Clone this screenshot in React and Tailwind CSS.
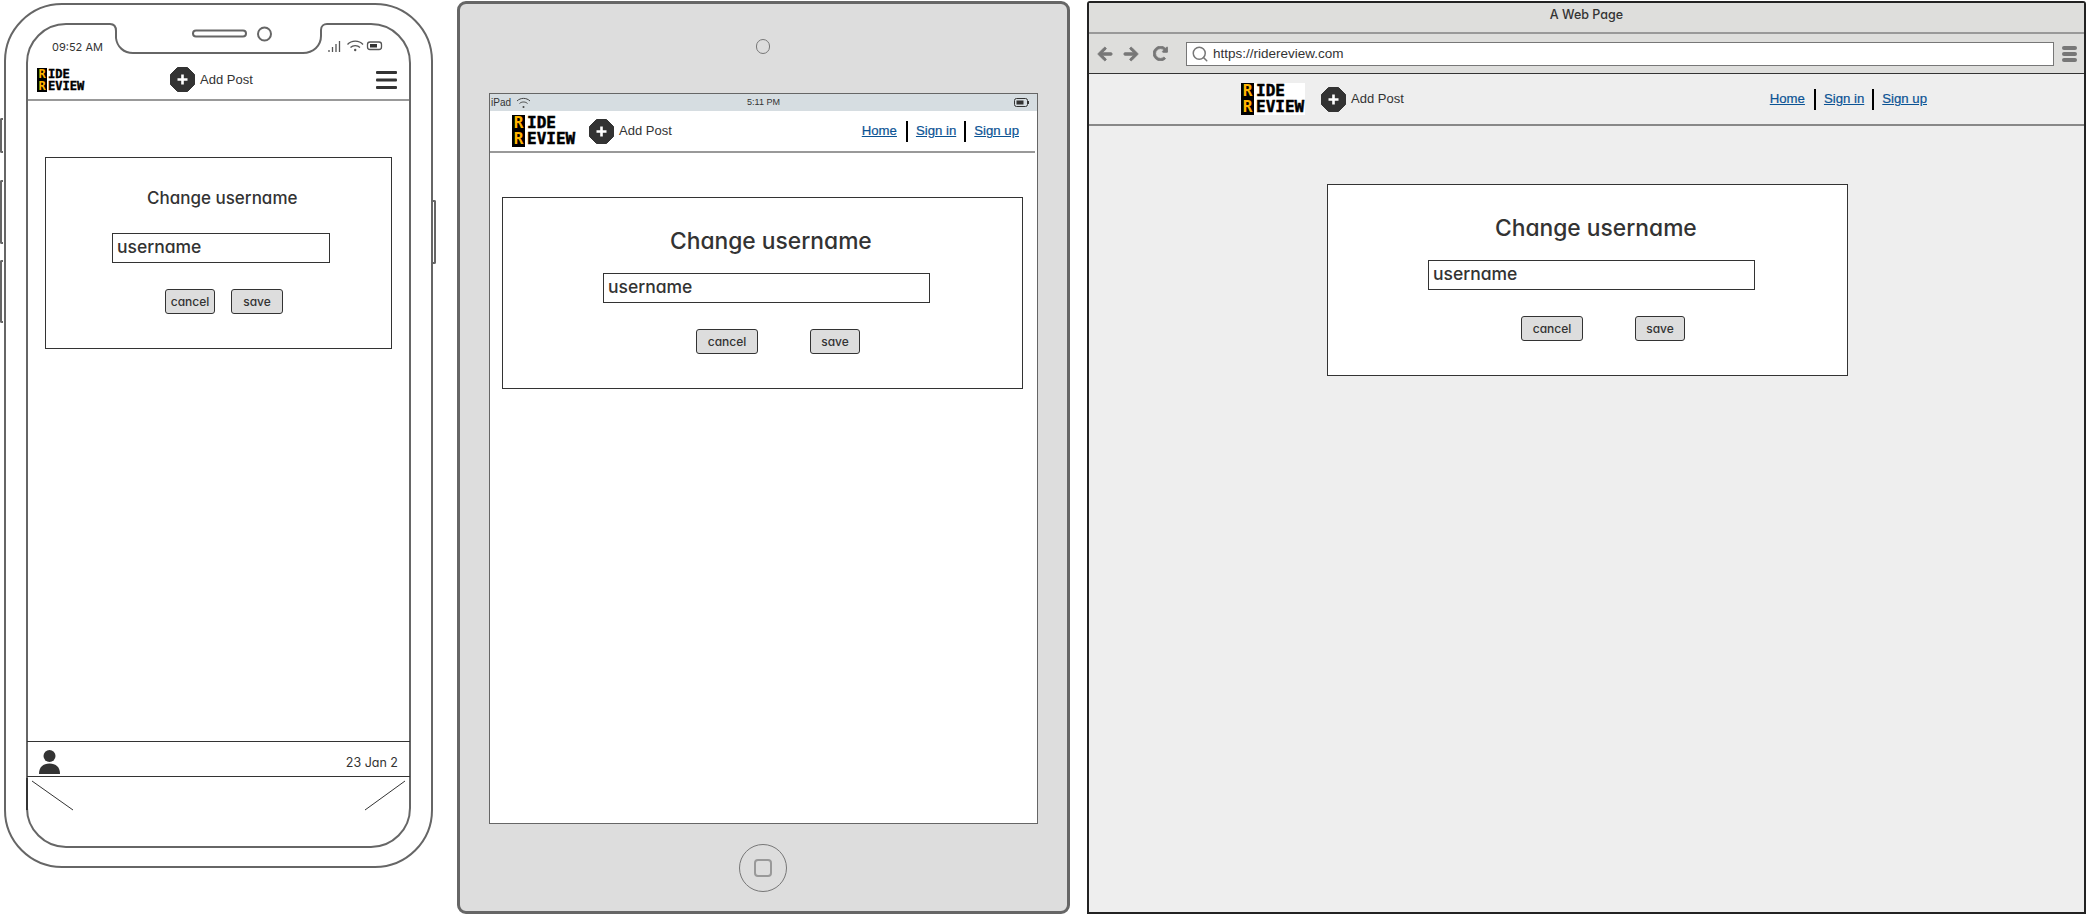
import { Search } from "lucide-react";
import { FaArrowLeft, FaArrowRight, FaRedoAlt } from "react-icons/fa";

const ROUND = "font-['Inter',sans-serif] [font-feature-settings:'cv11'] text-[#333]";
const ARIAL = "font-['Liberation_Sans',sans-serif]";

const LOGO = {
  sm: {
    wrap: "w-[48px]",
    row: "h-[12px] leading-[12px]",
    box: "w-[10px] text-[12px]",
    text: "text-[12px] ml-px [-webkit-text-stroke:0.4px_black]",
  },
  md: {
    wrap: "w-[64px] bg-white",
    row: "h-[16px] leading-[16px]",
    box: "w-[13px] text-[16px]",
    text: "text-[16px] ml-[2px] [-webkit-text-stroke:0.5px_black]",
  },
};

const CARD = {
  phone: {
    card: "w-[347px] h-[192px] ml-[17px] mt-[56px]",
    title: "ml-[101px] mt-[26px]",
    titleSize: "text-[17px] leading-[28px]",
    input: "ml-[66px] mt-[21px] w-[218px]",
    actions: "ml-[119px] mt-[26px] gap-[16px]",
    cancel: "w-[50px]",
    save: "w-[52px]",
  },
  wide: {
    card: "w-[521px] h-[192px]",
    title: "ml-[167px] mt-[27px]",
    titleSize: "text-[22.8px] leading-[32px]",
    input: "ml-[100px] mt-[16px] w-[327px]",
    actions: "ml-[193px] mt-[26px] gap-[52px]",
    cancel: "w-[62px]",
    save: "w-[50px]",
  },
};

function Logo({ size }) {
  const s = LOGO[size];
  const row = (rest) => (
    <div className={`flex font-['DejaVu_Sans_Mono',monospace] font-bold ${s.row}`}>
      <span className={`bg-black text-[#ffb400] text-center shrink-0 ${s.box}`}>R</span>
      <span className={`text-black whitespace-nowrap ${s.text}`}>{rest}</span>
    </div>
  );
  return (
    <div className={`shrink-0 ${s.wrap}`}>
      {row("IDE")}
      {row("EVIEW")}
    </div>
  );
}

function AddPost() {
  return (
    <div className="flex items-center gap-[5px] shrink-0">
      <svg width="25" height="25" viewBox="0 0 25 25">
        <path d="M7.5 0.5H17.5L24.5 7.5V17.5L17.5 24.5H7.5L0.5 17.5V7.5Z" fill="#333" strokeLinejoin="round" stroke="#333" />
        <path d="M12.5 7.5V17.5M7.5 12.5H17.5" stroke="#fff" strokeWidth="2.6" />
      </svg>
      <span className={`${ARIAL} text-[13px] text-[#333]`}>Add Post</span>
    </div>
  );
}

function NavLinks() {
  return (
    <div className={`${ARIAL} flex items-center text-[13.2px] text-[#0b5394] [-webkit-text-stroke:0.2px_#0b5394] shrink-0`}>
      <a className="underline">Home</a>
      <span className="w-[2px] h-[21px] bg-black ml-[9px] mr-[8px]" />
      <a className="underline">Sign in</a>
      <span className="w-[2px] h-[21px] bg-black ml-[8px] mr-[8px]" />
      <a className="underline">Sign up</a>
    </div>
  );
}

function ChangeUsername({ variant, className = "" }) {
  const v = CARD[variant];
  return (
    <div className={`bg-white border border-[#333] shrink-0 font-medium ${v.card} ${className} ${ROUND}`}>
      <div className={`${v.title} ${v.titleSize} whitespace-nowrap`}>Change username</div>
      <div className={`${v.input} h-[30px] border border-[#333] pl-[4px] text-[17.5px] leading-[26px]`}>username</div>
      <div className={`flex ${v.actions}`}>
        <button className={`${v.cancel} h-[25px] bg-[#ddd] border border-[#333] rounded-[3px] text-[12px] text-center`}>cancel</button>
        <button className={`${v.save} h-[25px] bg-[#ddd] border border-[#333] rounded-[3px] text-[12px] text-center`}>save</button>
      </div>
    </div>
  );
}

function Phone() {
  return (
    <div className="relative shrink-0 w-[429px] h-[865px] ml-[4px] mt-[3px] border-2 border-[#666] rounded-[58px] px-[20px] pt-[18px] pb-[18px]">
      <span className="absolute left-[-6px] top-[113px] w-[3px] h-[35px] border-2 border-r-0 border-[#666] rounded-l-[2px]" />
      <span className="absolute left-[-6px] top-[175px] w-[3px] h-[64px] border-2 border-r-0 border-[#666] rounded-l-[2px]" />
      <span className="absolute left-[-6px] top-[255px] w-[3px] h-[63px] border-2 border-r-0 border-[#666] rounded-l-[2px]" />
      <span className="absolute right-[-5px] top-[195px] w-[3px] h-[64px] border-2 border-l-0 border-[#666] rounded-r-[2px]" />

      <div className="relative h-full border-2 border-[#666] rounded-[40px] flex flex-col bg-white">
        <div className={`h-[35px] shrink-0 pl-[24px] pt-[15px] text-[11px] leading-[14px] ${ROUND}`}>09:52 AM</div>
        <div className="h-[41px] shrink-0 flex items-center pl-[9px] pr-[12px] border-b-2 border-[#999]">
          <Logo size="sm" />
          <div className="ml-[85px]">
            <AddPost />
          </div>
          <svg className="ml-auto" width="21" height="18" viewBox="0 0 21 18" fill="#333">
            <rect width="21" height="3" rx="1" />
            <rect y="7.5" width="21" height="3" rx="1" />
            <rect y="15" width="21" height="3" rx="1" />
          </svg>
        </div>

        <ChangeUsername variant="phone" />

        <div className={`mt-auto h-[36px] shrink-0 border-y border-[#333] flex items-end justify-between pl-[12px] pr-[12px] -mx-[1px] ${ROUND}`}>
          <svg className="mb-[2px]" width="21" height="24" viewBox="0 0 21 24" fill="#333">
            <circle cx="10.5" cy="6" r="6" />
            <path d="M0 24C0 17 4 13.5 10.5 13.5S21 17 21 24Z" />
          </svg>
          <span className="text-[12.5px] leading-[18px] mb-[4px]">23 Jan 2</span>
        </div>
        <div className="h-[69px] shrink-0" />

        <svg className="absolute left-[-2px] bottom-[-2px]" width="384" height="70" viewBox="26 778 384 70" fill="none" stroke="#333">
          <path d="M32 781L73 810M405 781L365 810" />
          <path d="M27 778V810" strokeWidth="2" />
        </svg>
      </div>

      {/* notch, speaker, camera and status icons */}
      <svg className="absolute left-[-2px] top-[-2px]" width="429" height="60" viewBox="4 3 429 60" fill="none">
        <path d="M110 21H327V25H110Z" fill="#fff" />
        <path d="M108 24H110C114 24 116 27 116 31V38C117 47 124 53 133 53H303C313 53 321 46 321 36V30C321 26 324 24 327 24H329" fill="#fff" stroke="#666" strokeWidth="2" />
        <rect x="193" y="30.5" width="53" height="6" rx="3" stroke="#666" strokeWidth="2" />
        <circle cx="264.5" cy="34" r="6.5" stroke="#666" strokeWidth="2" />
        <path d="M329 52V50M332.5 52V47M336 52V44M339.5 52V41" stroke="#555" strokeWidth="1.3" />
        <path d="M347.5 44.5C351.5 40 359 40 363 44.5M350.5 47.5C353 45 357.5 45 360 47.5" stroke="#555" strokeWidth="1.3" />
        <circle cx="355.2" cy="50" r="1.2" fill="#555" />
        <rect x="367.5" y="42" width="14" height="7.5" rx="2.5" stroke="#555" strokeWidth="1.3" />
        <rect x="370" y="44" width="7" height="3.5" fill="#333" />
      </svg>
    </div>
  );
}

function Tablet() {
  return (
    <div className="shrink-0 w-[613px] h-[913px] ml-[24px] mt-[1px] border-[3px] border-[#666] rounded-[9px] bg-[#ddd] flex flex-col items-center">
      <span className="w-[14px] h-[15px] mt-[35px] mr-[2px] rounded-full border border-[#777] shrink-0" />
      <div className="w-[549px] h-[731px] mt-[39px] border border-[#666] bg-white flex flex-col shrink-0">
        <div className={`h-[17px] shrink-0 bg-[#d6dde1] relative flex items-center pl-[1px] text-[10px] ${ARIAL} text-[#333]`}>
          <span>iPad</span>
          <svg className="ml-[5px]" width="15" height="12" viewBox="0 0 15 12" fill="none" stroke="#444">
            <path d="M1 4C4.5 .5 10.5 .5 14 4M3.5 6.5C5.5 4.5 9.5 4.5 11.5 6.5" />
            <circle cx="7.5" cy="10" r="1" fill="#444" stroke="none" />
          </svg>
          <span className="absolute left-1/2 -translate-x-1/2 text-[9px]">5:11 PM</span>
          <svg className="ml-auto mr-[8px]" width="15" height="9" viewBox="0 0 15 9" fill="none">
            <rect x=".5" y=".5" width="13" height="8" rx="2" stroke="#333" />
            <rect x="2.5" y="2.5" width="7" height="4" fill="#333" />
            <rect x="14" y="3" width="1" height="3" fill="#333" />
          </svg>
        </div>
        <div className="h-[42px] shrink-0 flex items-center pl-[22px] pr-[16px] gap-[13px] border-b-2 border-[#999] mr-[2px]">
          <Logo size="md" />
          <AddPost />
          <div className="ml-auto">
            <NavLinks />
          </div>
        </div>
        <ChangeUsername variant="wide" className="ml-[12px] mt-[44px]" />
      </div>
      <div className="relative w-[48px] h-[48px] mt-[20px] mr-[2px] rounded-full border border-[#777] flex items-center justify-center shrink-0">
        <span className="w-[18px] h-[18px] border-2 border-[#999] rounded-[4px]" />
      </div>
    </div>
  );
}

function Browser() {
  return (
    <div className="shrink-0 w-[999px] h-[913px] ml-[17px] mt-[1px] border-2 border-[#222] rounded-t-[3px] flex flex-col bg-[#eee]">
      <div className={`h-[31px] shrink-0 bg-[#dededc] border-b-2 border-[#999] text-center pt-[3px] text-[12.5px] font-medium leading-[18px] ${ROUND}`}>
        A Web Page
      </div>
      <div className="h-[40px] shrink-0 bg-[#dededc] border-b border-[#333] flex items-center pl-[8px] pr-[7px] text-[#777]">
        <FaArrowLeft size={16} stroke="currentColor" strokeWidth={30} />
        <FaArrowRight size={16} stroke="currentColor" strokeWidth={30} className="ml-[10px]" />
        <FaRedoAlt size={15} stroke="currentColor" strokeWidth={30} className="ml-[14px]" />
        <div className={`flex items-center h-[24px] flex-1 ml-[18px] border border-[#777] bg-white pl-[4px] ${ARIAL} text-[13.5px] text-[#333]`}>
          <Search size={18} strokeWidth={2} className="text-[#777]" />
          <span className="ml-[4px] pt-px">https://ridereview.com</span>
        </div>
        <svg className="ml-[8px]" width="15" height="16" viewBox="0 0 15 16" fill="#777">
          <rect width="15" height="4" rx="2" />
          <rect y="6" width="15" height="4" rx="2" />
          <rect y="12" width="15" height="4" rx="2" />
        </svg>
      </div>
      <div className="h-[52px] shrink-0 border-b-2 border-[#888] flex items-center pl-[152px] pr-[157px] gap-[16px]">
        <Logo size="md" />
        <AddPost />
        <div className="ml-auto">
          <NavLinks />
        </div>
      </div>
      <ChangeUsername variant="wide" className="ml-[238px] mt-[58px]" />
    </div>
  );
}

export default function App() {
  return (
    <div className="flex w-[2087px] h-[916px] bg-white overflow-hidden">
      <Phone />
      <Tablet />
      <Browser />
    </div>
  );
}
